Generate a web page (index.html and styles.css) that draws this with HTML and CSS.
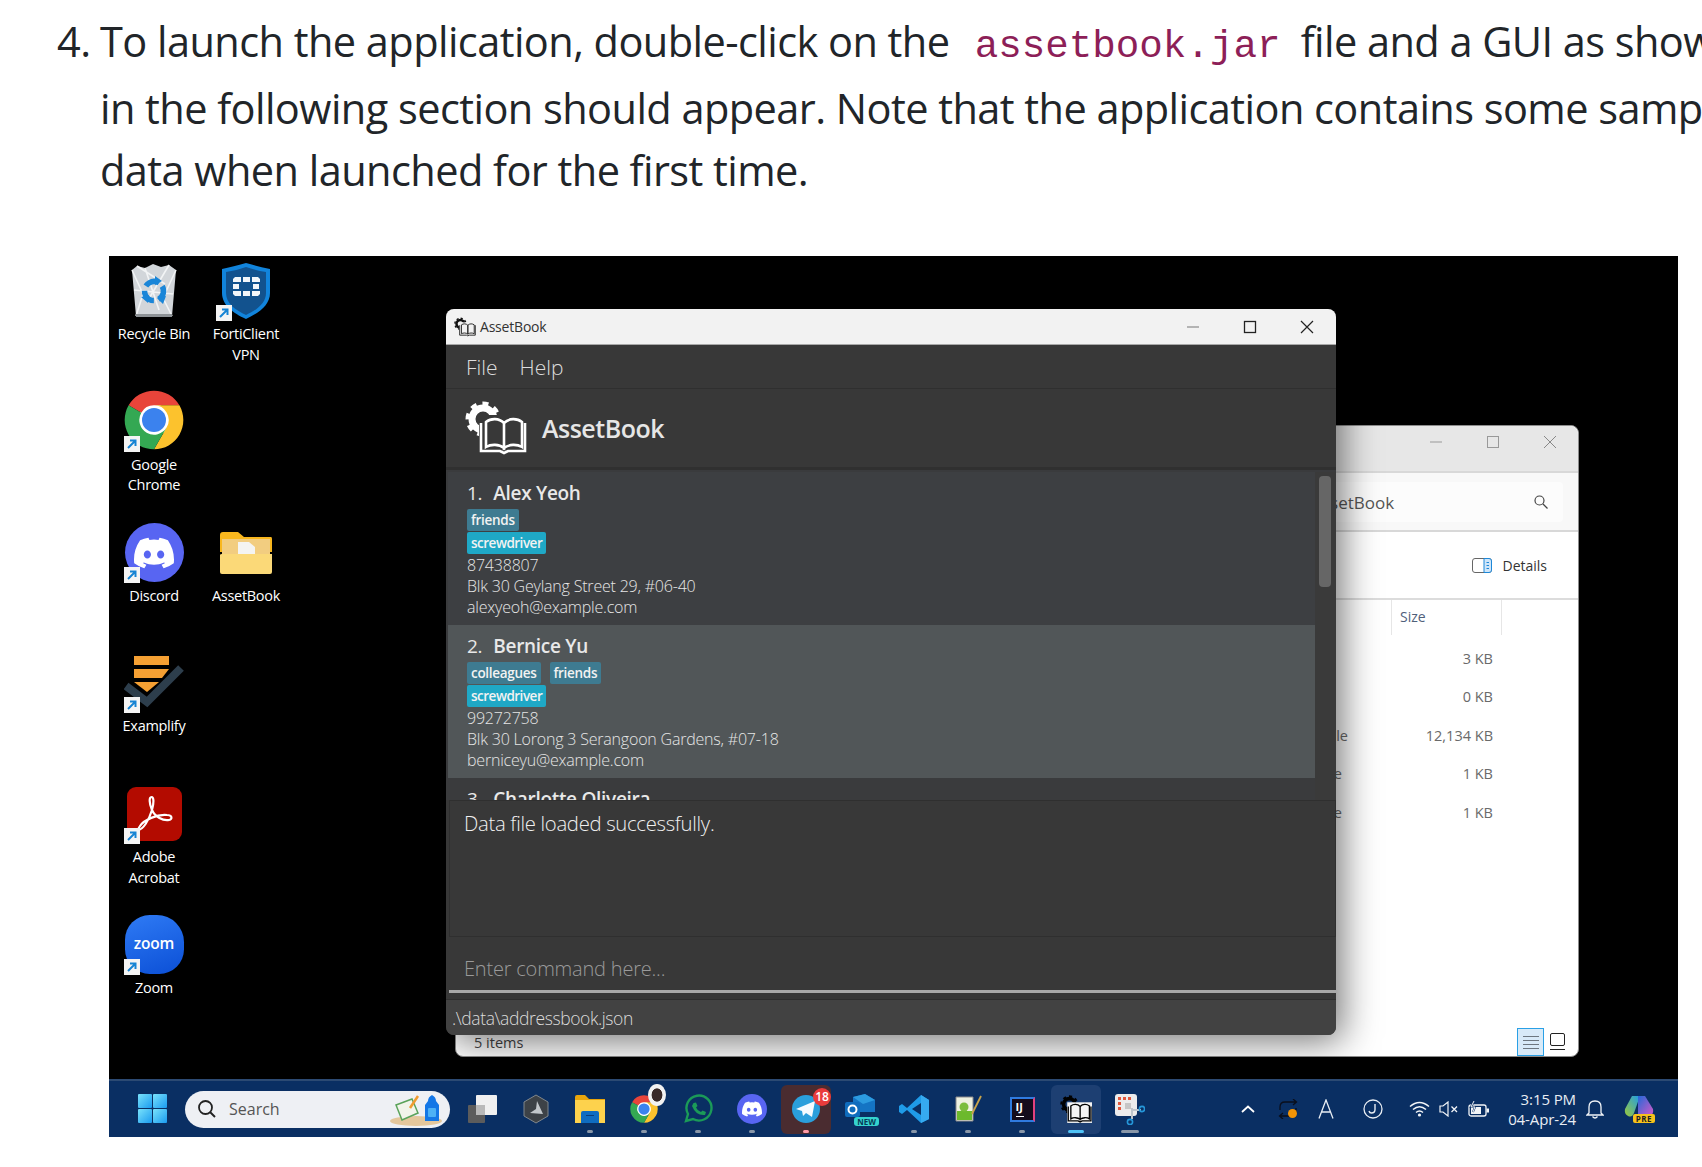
FILE: index.html
```html
<!DOCTYPE html>
<html lang="en">
<head>
    <meta charset="UTF-8">
    <title>AssetBook user guide</title>
    <link rel="stylesheet" href="styles.css">
</head>
<body>

<svg class="defs" width="0" height="0">
    <symbol id="shortcut" viewBox="0 0 16 16">
        <rect width="16" height="16" fill="#f4f4f4"/>
        <path d="M4 12 L11 5 M6 4.5 H11.5 V10" fill="none" stroke="#1684d4" stroke-width="2"/>
    </symbol>
    <symbol id="logo" viewBox="0 0 62 54">
        <circle cx="18" cy="18" r="11" fill="none" stroke="currentColor" stroke-width="7"/>
        <circle cx="18" cy="18" r="15.5" fill="none" stroke="currentColor" stroke-width="4" stroke-dasharray="6 6"/>
        <rect x="14" y="14" width="50" height="40" fill="var(--page)"/>
        <path d="M21 21 C26 17 34 17 39 22 V47 C34 43 26 43 21 46 Z M39 22 C44 17 52 17 57 21 V46 C52 43 44 43 39 47 Z" fill="var(--page)" stroke="var(--ink)" stroke-width="2.6"/>
        <path d="M16 22 V50 H35 L39 52 L43 50 H60 V22" fill="none" stroke="var(--ink)" stroke-width="2.6"/>
    </symbol>
    <symbol id="clyde" viewBox="0 0 24 24">
        <path d="M20.317 4.37a19.791 19.791 0 0 0-4.885-1.515.074.074 0 0 0-.079.037c-.21.375-.444.864-.608 1.25a18.27 18.27 0 0 0-5.487 0 12.64 12.64 0 0 0-.617-1.25.077.077 0 0 0-.079-.037A19.736 19.736 0 0 0 3.677 4.37a.07.07 0 0 0-.032.027C.533 9.046-.32 13.58.099 18.057a.082.082 0 0 0 .031.057 19.9 19.9 0 0 0 5.993 3.03.078.078 0 0 0 .084-.028c.462-.63.874-1.295 1.226-1.994a.076.076 0 0 0-.041-.106 13.107 13.107 0 0 1-1.872-.892.077.077 0 0 1-.008-.128 10.2 10.2 0 0 0 .372-.292.074.074 0 0 1 .077-.01c3.928 1.793 8.18 1.793 12.062 0a.074.074 0 0 1 .078.01c.12.098.246.198.373.292a.077.077 0 0 1-.006.127 12.299 12.299 0 0 1-1.873.892.077.077 0 0 0-.041.107c.36.698.772 1.362 1.225 1.993a.076.076 0 0 0 .084.028 19.839 19.839 0 0 0 6.002-3.03.077.077 0 0 0 .032-.054c.5-5.177-.838-9.674-3.549-13.66a.061.061 0 0 0-.031-.03zM8.02 15.33c-1.183 0-2.157-1.085-2.157-2.419 0-1.333.956-2.419 2.157-2.419 1.21 0 2.176 1.096 2.157 2.42 0 1.333-.956 2.418-2.157 2.418zm7.975 0c-1.183 0-2.157-1.085-2.157-2.419 0-1.333.955-2.419 2.157-2.419 1.21 0 2.176 1.096 2.157 2.42 0 1.333-.946 2.418-2.157 2.418z" fill="#fff"/>
    </symbol>
    <symbol id="chrome" viewBox="0 0 48 48">
        <circle cx="24" cy="24" r="12" fill="#fff"/>
        <circle cx="24" cy="24" r="9" fill="#3b82ee"/>
        <path d="M4.95 13 A22 22 0 0 1 43.05 13 H24 A11 11 0 0 0 14.47 18.5 Z" fill="#e8443a"/>
        <path d="M43.05 13 A22 22 0 0 1 24 46 L33.53 29.5 A11 11 0 0 0 24 13 Z" fill="#fcc22d"/>
        <path d="M4.95 13 A22 22 0 0 0 24 46 L33.53 29.5 A11 11 0 0 1 14.47 18.5 Z" fill="#34a853"/>
    </symbol>
</svg>

<div class="step">
    <span class="step-num">4.</span>
    <p class="step-text">To launch the application, double-click on the <code class="inline-code">assetbook.jar</code> file and a GUI as shown<br>in the following section should appear. Note that the application contains some sample<br>data when launched for the first time.</p>
</div>

<div class="desktop">

    <div class="desk-icons">
        <div class="desk-icon">
            <div class="desk-art">
                <svg width="46" height="54" viewBox="0 0 46 54">
                    <path d="M1 6 L6 2 L14 4 L22 0 L30 3 L38 1 L45 6 L41 52 H5 Z" fill="#d2d6da"/>
                    <path d="M1 6 L12 30 L5 52 M45 6 L32 34 L41 52 M14 4 L28 46 M6 2 L34 20 M38 1 L16 38 M3 26 L42 30" fill="none" stroke="#f2f4f5" stroke-width="1.600"/>
                    <circle cx="23" cy="27" r="9.500" fill="none" stroke="#1a86d8" stroke-width="5.500" stroke-dasharray="15 4.900" transform="rotate(-30 23 27)"/>
                    <path d="M24 12 l7 5 -7 4 z M35 32 l-3 8 -6 -6 z M10 33 l8 -2 -1 8 z" fill="#1a86d8"/>
                    <rect x="5" y="50" width="36" height="3" fill="#8d9296"/>
                </svg>
            </div>
            <span class="desk-label">Recycle Bin</span>
        </div>
        <div class="desk-icon">
            <div class="desk-art">
                <svg width="50" height="56" viewBox="0 0 50 56">
                    <path d="M1 6 C10 4 18 2 25 0 C32 2 40 4 49 6 V30 C49 42 38 50 25 56 C12 50 1 42 1 30 Z" fill="#1184dc"/>
                    <path d="M5 9 C12 8 19 6 25 4 C31 6 38 8 45 9 V30 C45 40 36 47 25 52 C14 47 5 40 5 30 Z" fill="#12528e"/>
                    <path d="M14 14 h6 v5 h-8 v-3 z M22 14 h7 v5 h-7 z M31 14 h6 l2 2 v3 h-8 z M12 21 h6 v5 h-6 z M32 21 h6 v5 h-6 z M12 28 h8 v5 h-6 l-2 -2 z M22 28 h7 v5 h-7 z M31 28 h8 v3 l-2 2 h-6 z" fill="#f2f6fa"/>
                </svg>
                <svg class="desk-badge"><use href="#shortcut"/></svg>
            </div>
            <span class="desk-label">FortiClient<br>VPN</span>
        </div>
        <div class="desk-icon first-col">
            <div class="desk-art">
                <svg class="chrome-big" width="64" height="64"><use href="#chrome"/></svg>
                <svg class="desk-badge"><use href="#shortcut"/></svg>
            </div>
            <span class="desk-label">Google<br>Chrome</span>
        </div>
        <div class="desk-icon first-col">
            <div class="desk-art">
                <span class="discord-disc"><svg width="40" height="40"><use href="#clyde"/></svg></span>
                <svg class="desk-badge"><use href="#shortcut"/></svg>
            </div>
            <span class="desk-label">Discord</span>
        </div>
        <div class="desk-icon">
            <div class="desk-art">
                <svg width="52" height="42" viewBox="0 0 52 42">
                    <path d="M0 3 Q0 0 3 0 H18 L24 5 H51 Q52 5 52 7 V20 H0 Z" fill="#f9b71e"/>
                    <rect x="2" y="7" width="48" height="16" fill="#f2cd80"/>
                    <path d="M18 10 H29 L35 15 V22 H18 Z" fill="#f4f4f2"/>
                    <path d="M0 23 Q0 22 2 22 H52 V40 Q52 42 50 42 H2 Q0 42 0 40 Z" fill="#fbd978"/>
                </svg>
            </div>
            <span class="desk-label">AssetBook</span>
        </div>
        <div class="desk-icon first-col">
            <div class="desk-art">
                <svg width="60" height="54" viewBox="0 0 60 54">
                    <rect x="10" y="0" width="35" height="9" fill="#f5a033"/>
                    <path d="M10 13 H45 L38 22 H10 Z" fill="#f5a033"/>
                    <path d="M10 26 H35 L23 36 Z" fill="#f5a033"/>
                    <path d="M2 30 L23 46 L57 12" fill="none" stroke="#2d3e4c" stroke-width="8"/>
                </svg>
                <svg class="desk-badge"><use href="#shortcut"/></svg>
            </div>
            <span class="desk-label">Examplify</span>
        </div>
        <div class="desk-icon first-col">
            <div class="desk-art">
                <span class="acrobat-tile">
                    <svg width="54" height="54" viewBox="0 0 54 54">
                        <path d="M11 43 C16 43 22 33 25 23 C27 16 27 10 24.500 10 C22 10 22 16 25 23 C28 30 36 34 42 33 C46 32 45 28 40 28 C30 27 17 33 13 39 C11 42 11 43 11 43 Z" fill="none" stroke="#fff" stroke-width="2.200"/>
                    </svg>
                </span>
                <svg class="desk-badge"><use href="#shortcut"/></svg>
            </div>
            <span class="desk-label">Adobe<br>Acrobat</span>
        </div>
        <div class="desk-icon first-col">
            <div class="desk-art">
                <span class="zoom-tile">zoom</span>
                <svg class="desk-badge"><use href="#shortcut"/></svg>
            </div>
            <span class="desk-label">Zoom</span>
        </div>
    </div>

    <!-- file explorer sits behind the app -->
    <div class="explorer">
        <div class="ex-title">
            <span class="ex-ctl"><svg width="14" height="14"><path d="M1 7 H13" stroke="#999" stroke-width="1"/></svg></span>
            <span class="ex-ctl"><svg width="14" height="14"><rect x="1.500" y="1.500" width="11" height="11" fill="none" stroke="#999"/></svg></span>
            <span class="ex-ctl"><svg width="14" height="14"><path d="M1 1 L13 13 M13 1 L1 13" stroke="#888" stroke-width="1"/></svg></span>
        </div>
        <div class="ex-address">
            <div class="ex-search">
                <span>Search AssetBook</span>
                <svg width="16" height="16" viewBox="0 0 16 16"><circle cx="6.500" cy="6.500" r="4.500" fill="none" stroke="#444" stroke-width="1.200"/><path d="M10 10 L14.500 14.500" stroke="#444" stroke-width="1.200"/></svg>
            </div>
        </div>
        <div class="ex-tools">
            <svg width="20" height="15" viewBox="0 0 20 15"><rect x=".5" y=".5" width="19" height="14" rx="2.500" fill="#fff" stroke="#666"/><path d="M12 .5 H17 Q19.500 .5 19.500 3 V12 Q19.500 14.500 17 14.500 H12 Z" fill="#cfe6fa" stroke="#1e88d8"/><path d="M14.500 4.500 H17 M14.500 7.500 H17 M14.500 10.500 H17" stroke="#1e88d8"/></svg>
            <span>Details</span>
        </div>
        <div class="ex-head"><span class="ex-size-head">Size</span></div>
        <div class="ex-row"><span class="ex-type"></span><span class="ex-size">3 KB</span></div>
        <div class="ex-row"><span class="ex-type"></span><span class="ex-size">0 KB</span></div>
        <div class="ex-row"><span class="ex-type">Executable Jar File</span><span class="ex-size">12,134 KB</span></div>
        <div class="ex-row"><span class="ex-type ex-type-short">JSON File</span><span class="ex-size">1 KB</span></div>
        <div class="ex-row"><span class="ex-type ex-type-short">JSON File</span><span class="ex-size">1 KB</span></div>
        <div class="ex-status">
            <span class="ex-count">5 items</span>
            <span class="ex-view ex-view-on"><svg width="18" height="14"><path d="M1 1.500 H17 M1 5.500 H17 M1 9.500 H17 M1 13.500 H17" stroke="#6d7780"/></svg></span>
            <span class="ex-view"><svg width="16" height="18"><rect x=".5" y=".5" width="14" height="12" rx="1.500" fill="#fff" stroke="#222"/><path d="M0 16.500 H15" stroke="#222"/></svg></span>
        </div>
    </div>

    <div class="app">
        <div class="app-title">
            <svg class="app-title-icon" width="22" height="20"><use href="#logo"/></svg>
            <span class="app-title-name">AssetBook</span>
            <span class="win-ctl win-min"><svg width="14" height="14"><path d="M1 7 H13" stroke="#777"/></svg></span>
            <span class="win-ctl"><svg width="14" height="14"><rect x="1.500" y="1.500" width="11" height="11" fill="none" stroke="#222" stroke-width="1.300"/></svg></span>
            <span class="win-ctl"><svg width="14" height="14"><path d="M1 1 L13 13 M13 1 L1 13" stroke="#222" stroke-width="1.200"/></svg></span>
        </div>
        <div class="menu">
            <span>File</span>
            <span>Help</span>
        </div>
        <div class="brand">
            <svg class="brand-icon" width="62" height="54"><use href="#logo"/></svg>
            <span class="brand-name">AssetBook</span>
        </div>
        <div class="list-wrap">
            <div class="list">
                <div class="card">
                    <div class="card-name"><span class="card-index">1.</span>Alex Yeoh</div>
                    <div class="tags"><span class="tag">friends</span></div>
                    <div class="tags"><span class="tag tag-asset">screwdriver</span></div>
                    <div class="card-line">87438807</div>
                    <div class="card-line">Blk 30 Geylang Street 29, #06-40</div>
                    <div class="card-line">alexyeoh@example.com</div>
                </div>
                <div class="card card-selected">
                    <div class="card-name"><span class="card-index">2.</span>Bernice Yu</div>
                    <div class="tags"><span class="tag">colleagues</span><span class="tag">friends</span></div>
                    <div class="tags"><span class="tag tag-asset">screwdriver</span></div>
                    <div class="card-line">99272758</div>
                    <div class="card-line">Blk 30 Lorong 3 Serangoon Gardens, #07-18</div>
                    <div class="card-line">berniceyu@example.com</div>
                </div>
                <div class="card">
                    <div class="card-name"><span class="card-index">3.</span>Charlotte Oliveira</div>
                </div>
            </div>
            <div class="scroll-track"><div class="scroll-thumb"></div></div>
        </div>
        <div class="result">Data file loaded successfully.</div>
        <div class="command"><span class="command-hint">Enter command here...</span></div>
        <div class="status">.\data\addressbook.json</div>
    </div>

    <div class="taskbar">
        <svg class="start" width="29" height="29" viewBox="0 0 29 29">
            <defs><linearGradient id="win" x1="0" y1="0" x2="1" y2="1"><stop offset="0" stop-color="#79e2fb"/><stop offset="1" stop-color="#1a9bf0"/></linearGradient></defs>
            <rect width="14" height="14" rx="1" fill="url(#win)"/>
            <rect x="15" width="14" height="14" rx="1" fill="url(#win)"/>
            <rect y="15" width="14" height="14" rx="1" fill="url(#win)"/>
            <rect x="15" y="15" width="14" height="14" rx="1" fill="url(#win)"/>
        </svg>
        <div class="search">
            <svg width="20" height="20" viewBox="0 0 20 20"><circle cx="8.500" cy="8.500" r="6.500" fill="none" stroke="#222" stroke-width="1.800"/><path d="M13 13 L18 18" stroke="#222" stroke-width="2"/></svg>
            <span class="search-text">Search</span>
            <svg class="search-art" width="56" height="36" viewBox="0 0 56 36">
                <ellipse cx="26" cy="30" rx="26" ry="5" fill="#e4c79c"/>
                <path d="M6 14 L22 8 L28 22 L12 29 Z" fill="#f1f4ea" stroke="#5aa35a" stroke-width="1.500"/>
                <path d="M20 17 L28 5" stroke="#ef9b30" stroke-width="2.500"/>
                <path d="M38 10 Q38 6 42 4 Q46 6 46 10 L49 14 V30 H35 V14 Z" fill="#1477e6"/>
                <rect x="38" y="17" width="8" height="9" rx="1" fill="#4db1f5"/>
            </svg>
        </div>
        <div class="tasks">
            <div class="task">
                <svg width="30" height="30" viewBox="0 0 30 30"><rect x="1" y="11" width="17" height="18" rx="1" fill="#5c5c5c"/><rect x="9" y="1" width="21" height="20" rx="1" fill="#f0f0f0"/><rect x="9" y="11" width="9" height="10" fill="#b9b9b9"/></svg>
            </div>
            <div class="task">
                <svg width="28" height="30" viewBox="0 0 28 30"><path d="M14 1 L26 8 V22 L14 29 L2 22 V8 Z" fill="#3d4247" stroke="#80878d"/><path d="M15 7 L21 20 L8 19 L14 15 Z" fill="#c2c7cb"/></svg>
            </div>
            <div class="task task-open">
                <svg width="30" height="28" viewBox="0 0 30 28"><path d="M0 2 Q0 0 2 0 H10 L14 4 H30 V28 H0 Z" fill="#e8a50c"/><rect y="5" width="30" height="23" fill="#fdd24d"/><path d="M6 18 Q6 16 8 16 H22 Q24 16 24 18 V28 H6 Z" fill="#0f6cc0"/><path d="M11 20.500 H19" stroke="#0a3c78"/></svg>
            </div>
            <div class="task task-open">
                <svg width="30" height="30"><use href="#chrome"/></svg>
                <span class="chrome-avatar"></span>
            </div>
            <div class="task task-open">
                <svg width="30" height="30" viewBox="0 0 30 30"><path d="M3 27 L5 20 A12.500 12.500 0 1 1 10 25 Z" fill="none" stroke="#1b9a58" stroke-width="2.400"/><path d="M10.500 9 L13 8.500 L14.500 12 L13 13.500 Q14.500 17 18 18 L19.500 16.500 L23 18 L22 21 Q13 22 9 12 Z" fill="#1b9a58"/></svg>
            </div>
            <div class="task task-open">
                <span class="discord-disc discord-small"><svg width="20" height="20"><use href="#clyde"/></svg></span>
            </div>
            <div class="task task-alert">
                <svg width="30" height="30" viewBox="0 0 30 30"><circle cx="15" cy="15" r="14" fill="#2a9fdc"/><path d="M5 15 L24 7 L21 23 L15 19 L12 22 L11 17 Z" fill="#f5fbff"/></svg>
                <span class="task-count">18</span>
            </div>
            <div class="task">
                <svg width="30" height="30" viewBox="0 0 30 30"><path d="M8 3 L20 0 L30 6 V18 H8 Z" fill="#1474c4"/><path d="M8 3 L20 0 L30 6 L18 10 Z" fill="#2c9be0"/><rect x="0" y="8" width="15" height="15" rx="2" fill="#0f6cbd"/><circle cx="7.500" cy="15.500" r="4" fill="none" stroke="#fff" stroke-width="2"/></svg>
                <span class="new-badge">NEW</span>
            </div>
            <div class="task task-open">
                <svg width="30" height="30" viewBox="0 0 30 30"><path d="M22 1 L30 6 V25 L22 29 L8 16 L3 20 L0 18 V12 L3 10 L8 14 Z" fill="#1f9be8"/><path d="M22 1 L22 29 L30 25 V6 Z" fill="#36aaf0"/><path d="M22 9 L13 15 L22 21 Z" fill="#0a2f63"/></svg>
            </div>
            <div class="task task-open">
                <svg width="30" height="30" viewBox="0 0 30 30"><path d="M3 3 H20 V27 H3 Z" fill="#eef1e0" stroke="#8b8b8b"/><rect x="4" y="17" width="15" height="9" fill="#6cb92c"/><circle cx="11" cy="13" r="4.500" fill="#7bbd3c"/><path d="M19 20 L28 2" stroke="#c7a34a" stroke-width="1.800"/></svg>
            </div>
            <div class="task task-open">
                <span class="idea-tile"><span class="idea-ij">IJ</span><span class="idea-bar"></span></span>
            </div>
            <div class="task task-active">
                <svg class="task-logo" width="32" height="28"><use href="#logo"/></svg>
            </div>
            <div class="task task-wide">
                <svg width="30" height="32" viewBox="0 0 30 32"><rect x="0" y="1" width="22" height="22" rx="3" fill="#ececec"/><path d="M3 4 h3 v3 h-3 z M8 4 h3 v3 h-3 z M13 4 h3 v3 h-3 z M3 9 h3 v3 h-3 z M3 14 h3 v3 h-3 z" fill="#e2583e"/><path d="M10 10 h6 v6 h-6 z" fill="#c6c6c6"/><path d="M17 15 V26 M17 17 H26" stroke="#bfc5cc" stroke-width="2"/><circle cx="15" cy="29" r="2.600" fill="none" stroke="#2596d8" stroke-width="1.600"/><circle cx="27" cy="16" r="2.600" fill="none" stroke="#2596d8" stroke-width="1.600"/></svg>
            </div>
        </div>
        <div class="tray">
            <svg class="tray-chevron" width="14" height="8" viewBox="0 0 14 8"><path d="M1 7 L7 1.500 L13 7" fill="none" stroke="#fff" stroke-width="1.800"/></svg>
            <span class="tray-sync">
                <svg width="20" height="20" viewBox="0 0 20 20"><path d="M2 11 V8 Q2 3 7 3 H18 M15 0 L18.500 3 L15 6 M18 9 V12 Q18 17 13 17 H2 M5 14 L1.500 17 L5 20" fill="none" stroke="#0a0f1c" stroke-width="1.300"/><circle cx="14.500" cy="14.500" r="4.500" fill="#f39406"/></svg>
            </span>
            <svg class="tray-a" width="16" height="20" viewBox="0 0 16 20"><path d="M1 19.500 L8 1 L15 19.500 M3.500 13 H12.500" fill="none" stroke="#e8edf3" stroke-width="1.300"/></svg>
            <svg class="tray-j" width="20" height="20" viewBox="0 0 20 20"><circle cx="10" cy="10" r="9" fill="none" stroke="#e8edf3" stroke-width="1.300"/><path d="M12 5 V10.500 Q12 14 8.500 14 Q6.500 14 6 12" fill="none" stroke="#e8edf3" stroke-width="1.400"/></svg>
            <svg class="tray-wifi" width="21" height="16" viewBox="0 0 21 16"><path d="M1 5.500 Q10.500 -2.500 20 5.500 M4 8.500 Q10.500 3 17 8.500 M7 11.500 Q10.500 8.500 14 11.500" fill="none" stroke="#f2f5f8" stroke-width="1.500"/><circle cx="10.500" cy="14" r="1.600" fill="#f2f5f8"/></svg>
            <svg class="tray-speaker" width="20" height="16" viewBox="0 0 20 16"><path d="M1 5 H4 L9 1 V15 L4 11 H1 Z" fill="none" stroke="#f2f5f8" stroke-width="1.200"/><path d="M12.500 5.500 L18 11 M18 5.500 L12.500 11" stroke="#f2f5f8" stroke-width="1.300"/></svg>
            <svg class="tray-battery" width="21" height="16" viewBox="0 0 21 16"><rect x="1" y="4" width="17" height="11" rx="2" fill="none" stroke="#f2f5f8" stroke-width="1.300"/><rect x="3" y="6" width="10" height="7" fill="#f2f5f8"/><rect x="18.500" y="7.500" width="2.500" height="4" fill="#f2f5f8"/><path d="M6 0 L3 6 H7 L5 11" fill="none" stroke="#0a2f63" stroke-width="2"/><path d="M6 0 L3 6 H7 L5 11" fill="none" stroke="#f2f5f8" stroke-width="1"/></svg>
            <div class="clock"><span>3:15 PM</span><span>04-Apr-24</span></div>
            <svg class="tray-bell" width="18" height="20" viewBox="0 0 18 20"><path d="M3 14 V8 Q3 2 9 2 Q15 2 15 8 V14 L17 16 H1 Z" fill="none" stroke="#f2f5f8" stroke-width="1.300"/><path d="M6.500 17.500 Q9 20.500 11.500 17.500" fill="none" stroke="#f2f5f8" stroke-width="1.300"/></svg>
            <div class="copilot">
                <svg width="30" height="24" viewBox="0 0 30 24">
                    <defs>
                        <linearGradient id="cpA" x1="0" y1="1" x2="1" y2="0"><stop offset="0" stop-color="#9bc93a"/><stop offset="1" stop-color="#1e9ce8"/></linearGradient>
                        <linearGradient id="cpB" x1="0" y1="0" x2="1" y2="1"><stop offset="0" stop-color="#2468d8"/><stop offset="1" stop-color="#d65ac8"/></linearGradient>
                    </defs>
                    <path d="M8 1 H16 L10 18 Q8 23 4 21 Q0 19 1 14 Z" fill="url(#cpA)"/>
                    <path d="M14 1 H21 L29 14 Q30 19 26 21 H14 Z" fill="url(#cpB)"/>
                </svg>
                <span class="copilot-pre">PRE</span>
            </div>
        </div>
    </div>
</div>

</body>
</html>
```

FILE: styles.css
```css
html, body {
    margin: 0;
    padding: 0;
}
body {
    width: 1702px;
    height: 1167px;
    overflow: hidden;
    background-color: #ffffff;
    font-family: "Open Sans", "Noto Sans", sans-serif;
    color: #212529;
}
.defs {
    position: absolute;
}

/* guide text */
.step {
    display: flex;
    align-items: baseline;
    height: 256px;
    padding-left: 57px;
    font-size: 41.5px;
    font-weight: 400;
    line-height: 62px;
    letter-spacing: -0.55px;
    white-space: nowrap;
}
.step-num {
    flex: none;
    width: 43px;
}
.step-text {
    margin: 10px 0 0;
}
.inline-code {
    display: inline-block;
    line-height: 60px;
    margin: 0 10px 0 15px;
    font-family: "Liberation Mono", "DejaVu Sans Mono", monospace;
    font-size: 39.2px;
    letter-spacing: 0;
    color: #8d1f58;
}

/* screenshot */
.desktop {
    position: relative;
    display: flex;
    flex-direction: column;
    width: 1569px;
    height: 881px;
    margin-left: 109px;
    background-color: #000000;
    overflow: hidden;
}
.desk-icons {
    position: absolute;
    left: -1px;
    top: 5px;
    display: grid;
    grid-template-columns: 92px 92px;
    grid-auto-rows: 130.8px;
}
.desk-icon {
    display: flex;
    flex-direction: column;
    align-items: center;
    font-size: 14.5px;
    line-height: 20.5px;
    color: #ffffff;
    text-align: center;
}
.first-col {
    grid-column: 1;
}
.desk-art {
    position: relative;
    display: flex;
    align-items: center;
    justify-content: center;
    width: 60px;
    height: 60px;
    margin-bottom: 3px;
}
.chrome-big {
    flex: none;
    margin: -3px -2px 0;
}
.desk-badge {
    position: absolute;
    left: 0;
    bottom: 0;
    width: 16px;
    height: 16px;
}
.desk-label {
    letter-spacing: -0.3px;
}
.discord-disc {
    display: flex;
    align-items: center;
    justify-content: center;
    width: 59px;
    height: 59px;
    border-radius: 50%;
    background-color: #5865f2;
}
.discord-small {
    width: 30px;
    height: 30px;
}
.acrobat-tile {
    display: block;
    width: 55px;
    height: 54px;
    border-radius: 9px;
    background-color: #b30b00;
}
.zoom-tile {
    display: flex;
    align-items: center;
    justify-content: center;
    width: 59px;
    height: 59px;
    padding-bottom: 3px;
    box-sizing: border-box;
    border-radius: 42% 46% 42% 42%;
    background: linear-gradient(160deg, #2f7bf5, #0b4fd6);
    color: #ffffff;
    font-size: 15.5px;
    font-weight: 600;
    letter-spacing: -0.2px;
}

/* explorer window */
.explorer {
    position: absolute;
    left: 346px;
    top: 169px;
    display: flex;
    flex-direction: column;
    width: 1124px;
    height: 632px;
    box-sizing: border-box;
    border: 1px solid #8c8c8c;
    border-radius: 8px;
    background-color: #ffffff;
    color: #444;
    font-size: 14.5px;
}
.ex-title {
    display: flex;
    justify-content: flex-end;
    flex: none;
    height: 47px;
    padding: 9px 21px 0 0;
    box-sizing: border-box;
    gap: 42px;
    border-bottom: 2px solid #d8d8d8;
    border-radius: 8px 8px 0 0;
    background-color: #e7e7e7;
}
.ex-ctl {
    display: flex;
    width: 14px;
    height: 14px;
}
.ex-ctl:not(:last-child) {
    margin-right: 1px;
}
.ex-address {
    display: flex;
    justify-content: flex-end;
    flex: none;
    height: 59px;
    padding: 9px 15px 8px 0;
    box-sizing: border-box;
    border-bottom: 2px solid #d8d8d8;
    background-color: #f8f8f8;
}
.ex-search {
    display: flex;
    align-items: center;
    justify-content: space-between;
    width: 350px;
    padding: 0 14px 0 40px;
    box-sizing: border-box;
    border-radius: 4px;
    background-color: #fcfcfc;
    color: #555;
    font-size: 17px;
}
.ex-tools {
    display: flex;
    align-items: center;
    justify-content: flex-end;
    flex: none;
    height: 68px;
    padding-right: 31px;
    gap: 10px;
    border-bottom: 2px solid #dcdcdc;
    box-sizing: border-box;
    color: #333;
    font-size: 14px;
}
.ex-head {
    flex: none;
    display: flex;
    align-items: flex-start;
    height: 39px;
    padding-left: 935px;
    box-sizing: border-box;
}
.ex-size-head {
    width: 111px;
    height: 35px;
    padding-left: 8px;
    box-sizing: border-box;
    border-left: 1px solid #e6e6e6;
    border-right: 1px solid #e6e6e6;
    line-height: 34px;
    color: #50607a;
    font-size: 14px;
}
.ex-row {
    display: flex;
    flex: none;
    height: 38.5px;
    align-items: center;
    color: #6a6a6a;
    font-size: 14.5px;
}
.ex-type {
    width: 892px;
    flex: none;
    box-sizing: border-box;
    text-align: right;
    white-space: nowrap;
}
.ex-type-short {
    padding-right: 6px;
}
.ex-size {
    width: 145px;
    text-align: right;
}
.ex-status {
    display: flex;
    align-items: flex-end;
    margin-top: auto;
    height: 30px;
    padding-left: 18px;
    color: #444;
}
.ex-count {
    margin-right: auto;
    line-height: 26px;
}
.ex-view {
    display: flex;
    align-items: center;
    justify-content: center;
    width: 27px;
    height: 28px;
    box-sizing: border-box;
}
.ex-view-on {
    border: 1px solid #2aa0e6;
    background-color: #d8eaf8;
}
.ex-view:last-child {
    margin-right: 7px;
}

/* AssetBook window */
.app {
    position: absolute;
    left: 337px;
    top: 53px;
    display: flex;
    flex-direction: column;
    width: 890px;
    height: 726px;
    border-radius: 8px;
    background-color: #383838;
    box-shadow: 6px 6px 36px rgba(0, 0, 0, 0.55);
    overflow: hidden;
    font-weight: 300;
    --ink: #ffffff;
    --page: #383838;
}
.app-title {
    display: flex;
    align-items: center;
    flex: none;
    height: 35px;
    padding-left: 8px;
    border-bottom: 1px solid #a8a8a8;
    background-color: #f2f2f2;
    color: #333;
    font-size: 14px;
    font-weight: 400;
    --ink: #222222;
    --page: #f2f2f2;
}
.app-title-icon {
    color: #111111;
}
.app-title-name {
    margin-left: 4px;
    letter-spacing: -0.2px;
}
.win-ctl {
    display: flex;
    justify-content: center;
    width: 57px;
}
.win-min {
    margin-left: auto;
}
.win-ctl:last-child {
    margin-right: 1px;
}
.menu {
    display: flex;
    flex: none;
    align-items: center;
    height: 44px;
    padding-left: 20px;
    gap: 22px;
    box-sizing: border-box;
    border-bottom: 1px solid #2f2f2f;
    color: #dddddd;
    font-size: 21px;
}
.brand {
    display: flex;
    flex: none;
    align-items: center;
    height: 81px;
    padding-left: 19px;
    gap: 15px;
    box-sizing: border-box;
    border-bottom: 3px solid #303030;
    color: #ffffff;
}
.brand-name {
    color: #e6e6e6;
    font-size: 25px;
    font-weight: 600;
    letter-spacing: -0.5px;
}
.list-wrap {
    display: flex;
    flex: none;
    height: 330px;
    padding: 2px 0 0 2px;
    box-sizing: border-box;
    background-color: #3a3b3d;
}
.list {
    width: 867px;
    overflow: hidden;
}
.card {
    height: 153px;
    padding: 8px 0 0 19px;
    box-sizing: border-box;
    background-color: #3d3f42;
    color: #e6e6e6;
    font-size: 16px;
    line-height: 21px;
}
.card:last-child {
    background-color: #3a3b3d;
}
.card-selected {
    background-color: #515658;
}
.card-name {
    height: 29px;
    color: #e8e8e8;
    font-size: 19px;
    font-weight: 600;
    line-height: 26px;
    letter-spacing: -0.3px;
}
.card-index {
    margin-right: 11px;
    font-weight: 500;
}
.tags {
    display: flex;
    gap: 9px;
    height: 23px;
}
.tag {
    height: 22px;
    padding: 0 4px;
    border-radius: 2px;
    background-color: #3e7b91;
    color: #f2f2f2;
    font-size: 13.5px;
    font-weight: 600;
    line-height: 22px;
    letter-spacing: -0.3px;
}
.tag-asset {
    background-color: #1fa8c6;
    letter-spacing: -0.5px;
}
.card-line {
    height: 21px;
    letter-spacing: -0.2px;
}
.scroll-track {
    width: 21px;
    padding: 4px 5px 0 4px;
    box-sizing: border-box;
    background-color: #3a3a3a;
}
.scroll-thumb {
    height: 111px;
    border-radius: 4px;
    background-color: #666666;
}
.result {
    flex: none;
    height: 137px;
    margin-left: 3px;
    padding: 5px 14px;
    box-sizing: border-box;
    border: 1px solid #2f2f2f;
    color: #f0f0f0;
    font-size: 20.3px;
    line-height: 34px;
    letter-spacing: -0.3px;
}
.command {
    flex: none;
    height: 56px;
    box-sizing: border-box;
    margin-left: 3px;
    padding: 15px 0 0 15px;
    border-bottom: 3px solid #a9a9a9;
    color: #9a9a9a;
    font-size: 20px;
    line-height: 34px;
    letter-spacing: -0.2px;
}
.status {
    flex: none;
    margin-top: 6px;
    height: 36px;
    padding-left: 6px;
    border-top: 1px solid #2f2f2f;
    box-sizing: border-box;
    background-color: #424242;
    color: #dcdcdc;
    font-size: 17.5px;
    line-height: 36px;
    letter-spacing: -0.4px;
}

/* taskbar */
.taskbar {
    display: flex;
    align-items: center;
    position: relative;
    margin-top: auto;
    height: 58px;
    box-sizing: border-box;
    padding: 0 24px 0 29px;
    border-top: 2px solid #2c4a73;
    background-color: #0a2f63;
}
.start {
    flex: none;
    margin-top: -1px;
}
.search {
    display: flex;
    align-items: center;
    flex: none;
    width: 265px;
    height: 37px;
    margin-left: 18px;
    padding-left: 12px;
    box-sizing: border-box;
    border-radius: 19px;
    background-color: #eef0f4;
    overflow: hidden;
    color: #555;
    font-size: 16px;
}
.search-text {
    margin-left: 12px;
}
.search-art {
    margin-left: auto;
    margin-right: 4px;
}
.tasks {
    display: flex;
    flex: none;
    margin-left: 5px;
}
.task {
    position: relative;
    display: flex;
    align-items: center;
    justify-content: center;
    width: 50px;
    height: 49px;
    margin: 0 2px;
    box-sizing: border-box;
}
.task-open::after,
.task-alert::after,
.task-active::after,
.task-wide::after {
    content: "";
    position: absolute;
    left: 22px;
    bottom: 1px;
    width: 6px;
    height: 3px;
    border-radius: 2px;
    background-color: #8896a8;
}
.task-alert {
    border-radius: 6px;
    background-color: #4a2c30;
}
.task-alert::after {
    background-color: #ff9aa8;
}
.task-active {
    border-radius: 6px;
    background-color: #1d3f72;
    color: #000000;
    --ink: #000000;
    --page: #f4f4f4;
}
.task-active::after {
    left: 17px;
    width: 16px;
    background-color: #4fc3f7;
}
.task-wide::after {
    left: 16px;
    width: 18px;
}
.chrome-avatar {
    position: absolute;
    right: 3px;
    top: -1px;
    width: 18px;
    height: 22px;
    border-radius: 50%;
    background: radial-gradient(#3a2a28 40%, #f2f2f2 45%);
}
.task-count {
    position: absolute;
    right: 0;
    top: 3px;
    width: 18px;
    height: 18px;
    border-radius: 50%;
    background-color: #ea3c3c;
    color: #ffffff;
    font-size: 12px;
    font-weight: 600;
    line-height: 18px;
    text-align: center;
}
.new-badge {
    position: absolute;
    right: 6px;
    bottom: 8px;
    padding: 0 3px;
    border-radius: 3px;
    background-color: #35d3cf;
    color: #063a55;
    font-size: 8px;
    font-weight: 700;
    line-height: 9px;
}
.idea-tile {
    display: flex;
    flex-direction: column;
    width: 25px;
    height: 25px;
    padding: 2px 4px;
    box-sizing: border-box;
    border: 2px solid #2f7be0;
    border-right-color: #e0417e;
    background-color: #140c1c;
    color: #ffffff;
}
.idea-ij {
    font-size: 11px;
    font-weight: 700;
    line-height: 12px;
}
.idea-bar {
    width: 8px;
    height: 1.5px;
    margin-top: 3px;
    background-color: #ffffff;
}
.tray {
    display: flex;
    align-items: center;
    margin-left: auto;
    color: #e8edf3;
}
.tray-sync {
    display: flex;
    margin-left: 23px;
}
.tray-a {
    margin-left: 20px;
}
.tray-j {
    margin-left: 29px;
}
.tray-wifi {
    margin-left: 26px;
}
.tray-speaker {
    margin-left: 9px;
}
.tray-battery {
    margin-left: 9px;
}
.clock {
    display: flex;
    flex-direction: column;
    align-items: flex-end;
    width: 85px;
    margin-left: 2px;
    font-size: 15px;
    line-height: 20px;
    letter-spacing: -0.1px;
}
.tray-bell {
    margin-left: 10px;
}
.copilot {
    position: relative;
    width: 30px;
    height: 28px;
    margin-left: 20px;
}
.copilot-pre {
    position: absolute;
    right: -1px;
    bottom: 0;
    padding: 0 3px;
    border-radius: 2px;
    background-color: #f7c21b;
    color: #222222;
    font-size: 8px;
    font-weight: 700;
    line-height: 9px;
    letter-spacing: 0.5px;
}
```
